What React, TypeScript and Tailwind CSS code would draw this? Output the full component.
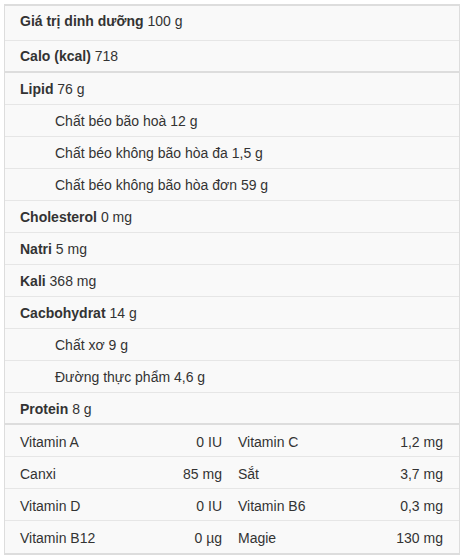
const rows: { label: string; value: string; bold?: boolean; indent?: boolean; thick?: boolean }[] = [
  { label: "Calo (kcal)", value: "718", bold: true, thick: true },
  { label: "Lipid", value: "76 g", bold: true },
  { label: "Chất béo bão hoà", value: "12 g", indent: true },
  { label: "Chất béo không bão hòa đa", value: "1,5 g", indent: true },
  { label: "Chất béo không bão hòa đơn", value: "59 g", indent: true },
  { label: "Cholesterol", value: "0 mg", bold: true },
  { label: "Natri", value: "5 mg", bold: true },
  { label: "Kali", value: "368 mg", bold: true },
  { label: "Cacbohydrat", value: "14 g", bold: true },
  { label: "Chất xơ", value: "9 g", indent: true },
  { label: "Đường thực phẩm", value: "4,6 g", indent: true },
  { label: "Protein", value: "8 g", bold: true, thick: true },
];

const vitamins: [string, string, string, string][] = [
  ["Vitamin A", "0 IU", "Vitamin C", "1,2 mg"],
  ["Canxi", "85 mg", "Sắt", "3,7 mg"],
  ["Vitamin D", "0 IU", "Vitamin B6", "0,3 mg"],
  ["Vitamin B12", "0 µg", "Magie", "130 mg"],
];

export default function App() {
  return (
    <div className="w-[467px] h-[559px] bg-white pt-[4px] pl-[4px] text-[14px] leading-[21px] text-[#333]" style={{ fontFamily: '"Liberation Sans", Arial, sans-serif' }}>
      <div className="w-[456px] border-x border-[#ddd] border-t-2 border-t-[#ddd] bg-[#f9f9f9]">
        {/* header row */}
        <div className="h-[35px] pt-[5px] pl-[15px] border-b border-[#e6e6e6]">
          <span className="font-bold">Giá trị dinh dưỡng</span> 100 g
        </div>

        {rows.map((r, i) => (
          <div
            key={r.label}
            className={
              (i === 0 ? "pt-[5px] " : "pt-[6px] ") +
              (r.indent ? "pl-[50px] " : "pl-[15px] ") +
              (r.thick ? "h-[32px] border-b-2 border-[#ddd]" : "h-[32px] border-b border-[#e6e6e6]")
            }
          >
            {r.bold ? <span className="font-bold">{r.label}</span> : r.label} {r.value}
          </div>
        ))}

        {/* vitamins & minerals */}
        {vitamins.map((v, i) => (
          <div
            key={v[0]}
            className={
              "grid grid-cols-[202px_205px] gap-x-[16px] pl-[15px] pt-[7px] " +
              (i === vitamins.length - 1 ? "h-[34px] border-b-2 border-[#ddd]" : "h-[32px] border-b border-[#e6e6e6]")
            }
          >
            <div className="flex justify-between">
              <span>{v[0]}</span>
              <span>{v[1]}</span>
            </div>
            <div className="flex justify-between">
              <span>{v[2]}</span>
              <span>{v[3]}</span>
            </div>
          </div>
        ))}
      </div>
    </div>
  );
}
